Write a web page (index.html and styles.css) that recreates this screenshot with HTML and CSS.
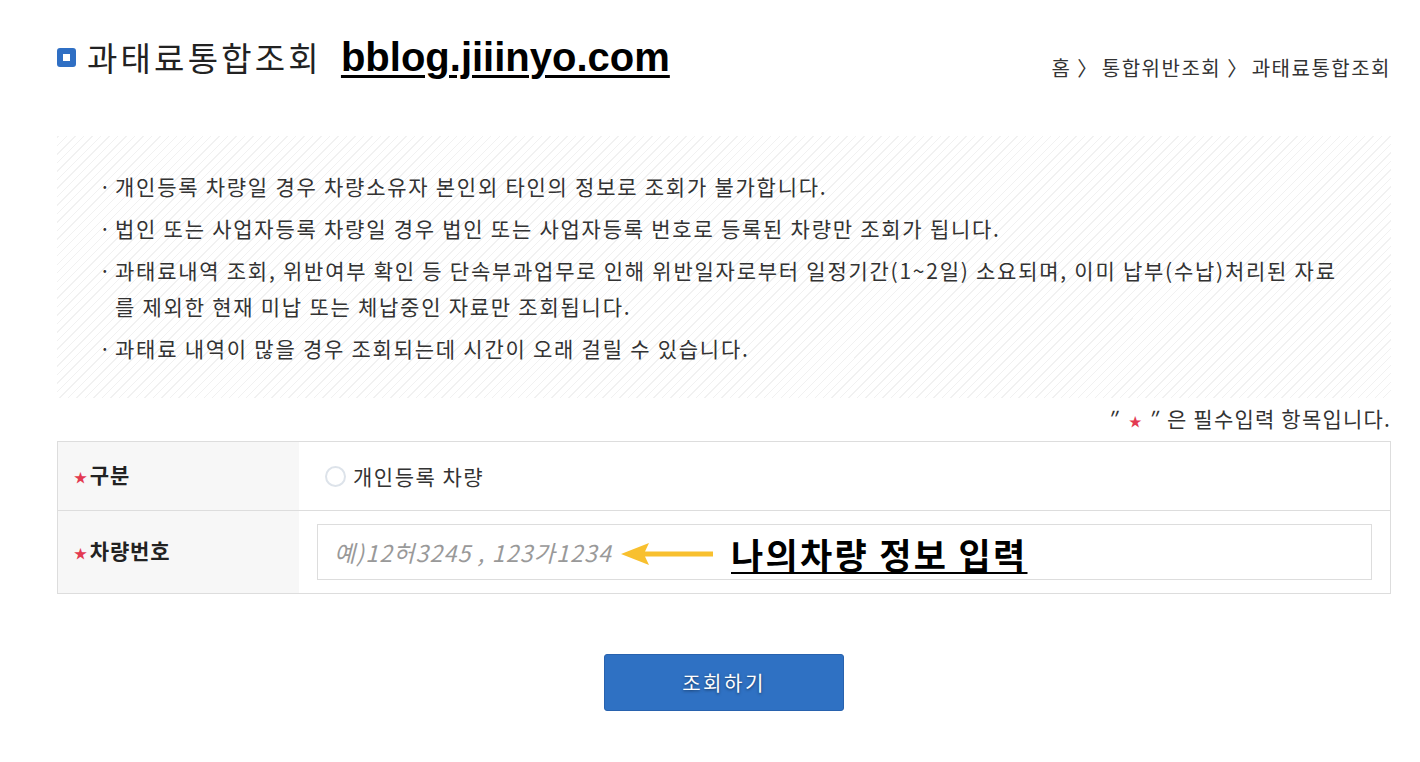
FILE: index.html
```html
<!DOCTYPE html>
<html>
<head>
  <title>과태료통합조회</title>
  <link rel="stylesheet" href="styles.css">
</head>
<body>
  <div class="page">
    <div class="head">
      <h1 class="title">
        <span class="title-icon"></span>
        과태료통합조회
        <span class="site">bblog.jiiinyo.com</span>
      </h1>
      <div class="crumb">홈 <span class="sep">〉</span>통합위반조회 <span class="sep">〉</span>과태료통합조회</div>
    </div>

    <div class="notice">
      <ul>
        <li>개인등록 차량일 경우 차량소유자 본인외 타인의 정보로 조회가 불가합니다.</li>
        <li>법인 또는 사업자등록 차량일 경우 법인 또는 사업자등록 번호로 등록된 차량만 조회가 됩니다.</li>
        <li>과태료내역 조회, 위반여부 확인 등 단속부과업무로 인해 위반일자로부터 일정기간(1~2일) 소요되며, 이미 납부(수납)처리된 자료를 제외한 현재 미납 또는 체납중인 자료만 조회됩니다.</li>
        <li>과태료 내역이 많을 경우 조회되는데 시간이 오래 걸릴 수 있습니다.</li>
      </ul>
    </div>

    <p class="req-note"><span class="q">″</span><span class="star">★</span><span class="q">″</span> 은 필수입력 항목입니다.</p>

    <table class="form">
      <tr class="row-kind">
        <th><span class="star">★</span>구분</th>
        <td>
          <label class="radio"><span class="radio-dot"></span>개인등록 차량</label>
        </td>
      </tr>
      <tr class="row-car">
        <th><span class="star">★</span>차량번호</th>
        <td>
          <div class="field">
            <input type="text" placeholder="예)12허3245 , 123가1234">
            <div class="memo">
              <svg class="arrow" width="94" height="24" viewBox="0 0 94 24">
                <path d="M0 12 L28 1 L24 9.5 L92 9.5 L92 14.5 L24 14.5 L28 23 Z" fill="#f8c02f"/>
              </svg>
              <span class="memo-text">나의차량 정보 입력</span>
            </div>
          </div>
        </td>
      </tr>
    </table>

    <div class="actions">
      <button class="btn">조회하기</button>
    </div>
  </div>
</body>
</html>
```

FILE: styles.css
```css
body {
  margin: 0;
  font-family: "Noto Sans CJK KR", "Noto Sans", sans-serif;
  color: #333;
  background: #fff;
}

.page {
  padding: 33px 29px 0 57px;
}

.head {
  display: flex;
  justify-content: space-between;
  align-items: flex-end;
}

.title {
  margin: 0;
  display: flex;
  align-items: center;
  font-size: 33px;
  font-weight: 400;
  color: #222;
  letter-spacing: 3.2px;
}

.title-icon {
  display: inline-block;
  width: 7px;
  height: 7px;
  border: 6px solid #2f6fc4;
  border-radius: 3px;
  background: #fff;
  margin-right: 11px;
}

.site {
  margin-left: 19px;
  font-family: "Liberation Sans", Arial, sans-serif;
  font-weight: 700;
  font-size: 40px;
  color: #000;
  letter-spacing: 0;
  text-decoration: underline;
  text-decoration-thickness: 3px;
  text-underline-offset: 4px;
}

.crumb {
  font-size: 20px;
  color: #333;
  letter-spacing: 1.5px;
  margin-bottom: -1px;
}

.crumb .sep {
  margin-right: 3px;
}

.notice {
  margin-top: 55px;
  padding: 32px 45px 32px 46px;
  background: repeating-linear-gradient(-45deg, #fff 0, #fff 5px, #f1f1f1 5px, #f1f1f1 6px);
}

.notice ul {
  margin: 0;
  padding: 0;
  list-style: none;
}

.notice li {
  position: relative;
  padding-left: 12px;
  font-size: 21px;
  line-height: 36px;
  margin-bottom: 6px;
  letter-spacing: 1.75px;
}

.notice li:last-child {
  margin-bottom: 0;
}

.notice li::before {
  content: "·";
  position: absolute;
  left: -4px;
  top: 0;
}

.req-note {
  margin: 4px 0 4px;
  text-align: right;
  font-size: 21px;
  line-height: 32px;
  letter-spacing: 1.2px;
}

.req-note .q {
  font-style: italic;
  color: #333;
  margin: 0 3px;
}

.star {
  color: #e33a51;
  font-size: 13px;
  vertical-align: 1px;
  margin-right: 3px;
}

.req-note .star {
  margin: 0 1px 0 8px;
}

.form {
  width: 100%;
  border-collapse: collapse;
  border: 1px solid #ddd;
}

.form th {
  width: 225px;
  padding: 0 0 4px 16px;
  background: #f7f7f7;
  text-align: left;
  font-size: 21px;
  font-weight: 700;
  color: #222;
  letter-spacing: 0.8px;
}

.form th .star {
  margin-right: 2px;
}

.form td {
  padding: 0 18px;
}

.row-kind td {
  height: 68px;
}

.row-kind th {
  height: 64px;
}

.row-kind th,
.row-kind td {
  border-bottom: 1px solid #ddd;
}

.row-car td {
  height: 82px;
}

.row-car th {
  height: 78px;
}

.radio {
  display: flex;
  align-items: center;
  font-size: 21px;
  color: #333;
  padding-left: 8px;
  letter-spacing: 1.5px;
}

.radio-dot {
  width: 17px;
  height: 17px;
  border: 2px solid #dde3ea;
  border-radius: 50%;
  margin-right: 7px;
}

.field {
  position: relative;
}

.field input {
  box-sizing: border-box;
  width: 100%;
  height: 56px;
  border: 1px solid #ddd;
  padding: 0 16px;
  font-family: "Noto Sans CJK KR", "Noto Sans", sans-serif;
  font-size: 23px;
  letter-spacing: 1.2px;
  outline: none;
}

.field input::placeholder {
  color: #999;
  font-style: italic;
}

.memo {
  position: absolute;
  left: 304px;
  top: 9px;
  display: flex;
  align-items: center;
  gap: 16px;
}

.memo-text {
  font-size: 35px;
  font-weight: 700;
  color: #000;
  letter-spacing: 2.3px;
  text-decoration: underline;
  text-decoration-thickness: 2px;
  text-underline-offset: 3px;
  line-height: 42px;
}

.actions {
  display: flex;
  justify-content: center;
  margin-top: 60px;
}

.btn {
  width: 240px;
  height: 57px;
  background: #2f71c3;
  border: 1px solid #2862ae;
  border-radius: 3px;
  color: #fff;
  font-family: "Noto Sans CJK KR", "Noto Sans", sans-serif;
  font-size: 20px;
  letter-spacing: 2.5px;
  text-shadow: 0 1px 3px rgba(0, 0, 0, 0.5);
}
```
